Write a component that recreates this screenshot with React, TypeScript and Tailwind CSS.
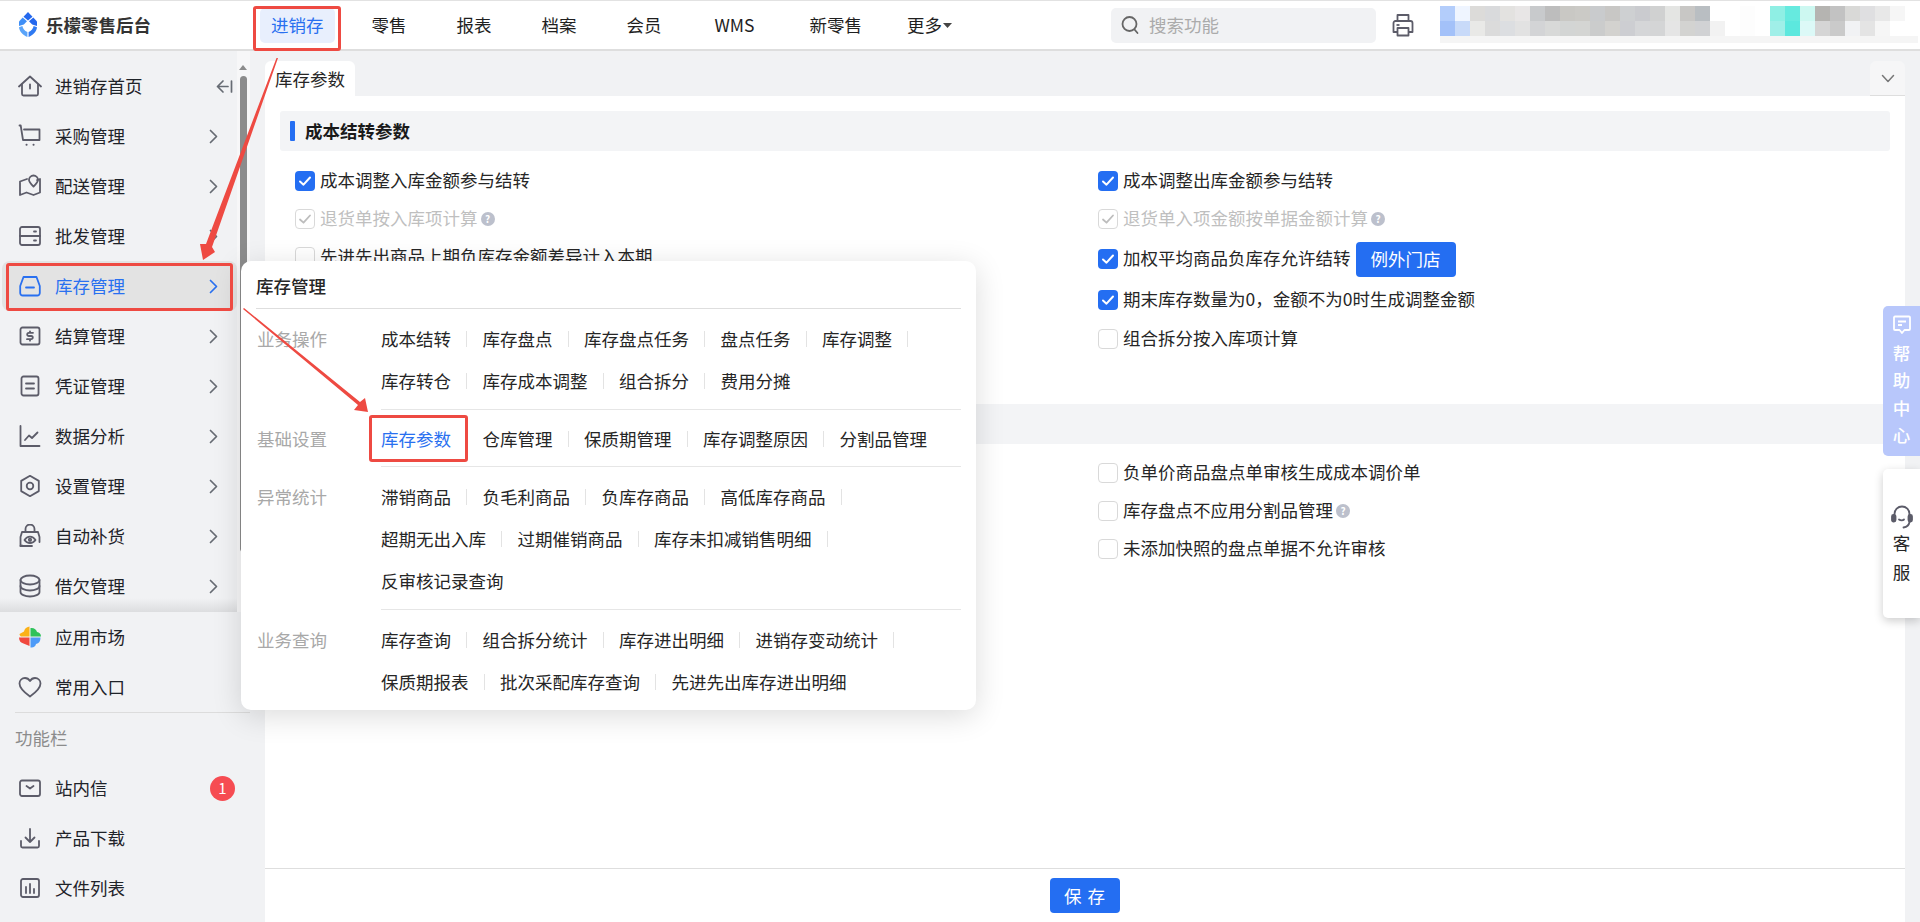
import React from 'react';

const S = ({ children, c = '#5c5c69', w = 1.8 }: { children: React.ReactNode; c?: string; w?: number }) => (
  <svg width="24" height="24" viewBox="0 0 24 24" fill="none" stroke={c} strokeWidth={w} strokeLinecap="round" strokeLinejoin="round">{children}</svg>
);

const icons: Record<string, (c?: string) => React.ReactNode> = {
  home: (c) => <S c={c}><path d="M1 12.500 12 2.500l11 10" /><path d="M4 10.500V20a1.500 1.500 0 0 0 1.500 1.500h13A1.500 1.500 0 0 0 20 20v-9.500" /><path d="M12 10.500v4" /></S>,
  cart: (c) => <S c={c}><path d="M1.500 1.500h1.200L5 16h16.500V5.500H6" /><path d="M8.500 20.800h.1M15.500 20.800h.1" strokeWidth="2" /></S>,
  map: (c) => <S c={c}><path d="M9 5 2 7.500V21l6.500-2.500 7 2.500 6.500-2.500V5l-3 1" /><path d="M15.500 12.500c-3-3-4.500-4.700-4.500-6.500a4.500 4.500 0 0 1 9 0c0 1.800-1.500 3.500-4.500 6.500Z" /></S>,
  box: (c) => <S c={c}><rect x="2" y="3" width="20" height="18" rx="2" /><path d="M2 12h20M16 7.500h2M16 16.500h2" /></S>,
  inv: (c) => <S c={c}><path d="M5.500 3h13l3.300 9v7a2.500 2.500 0 0 1-2.500 2.500H4.700A2.500 2.500 0 0 1 2.200 19v-7Z" /><path d="M8 13.500h8" /></S>,
  money: (c) => <S c={c}><rect x="2.500" y="3.500" width="19" height="17" rx="2" /><path d="M15 8.800h-4.200a1.500 1.500 0 0 0 0 3.200h2.400a1.500 1.500 0 0 1 0 3.200H9M12 7.300v1.500M12 15.200v1.500" /></S>,
  doc: (c) => <S c={c}><rect x="3.500" y="2.500" width="17" height="19" rx="2" /><path d="M8 9.500h8M8 14.500h8" /></S>,
  chart: (c) => <S c={c}><path d="M2.500 2v20h19" /><path d="M7 16l4-4.500 3 2.500 5.500-5.500" /></S>,
  gear: (c) => <S c={c}><path d="m12 1.800 8.800 5.100v10.200L12 22.200l-8.800-5.100V6.900Z" /><circle cx="12" cy="12" r="3.300" /></S>,
  auto: (c) => <S c={c}><path d="M7.500 8V5a4.500 4.500 0 0 1 9 0v3" /><path d="M4 21.500 2.500 22v-9L4 8h16l1.500 5v5" /><path d="M6.500 16c2.800-4.500 8.200-4.500 11 0-2.800 4-8.200 4-11 0Z" /><circle cx="12" cy="15.800" r="1.200" /><path d="M2.500 22H14" /></S>,
  debt: (c) => <S c={c}><ellipse cx="12" cy="6" rx="9.500" ry="4.500" /><path d="M2.500 6v12c0 2.500 4.300 4.500 9.500 4.500s9.500-2 9.500-4.500V6" /><path d="M2.500 12c0 2.500 4.300 4.500 9.500 4.500s9.500-2 9.500-4.500" /></S>,
  heart: (c) => <S c={c}><path d="M12 21.500C5 16.500 1.500 13 1.500 8.500 1.500 5.300 4 3 7 3c2 0 3.800 1 5 3 1.200-2 3-3 5-3 3 0 5.500 2.300 5.500 5.500 0 4.500-3.500 8-10.500 13Z" /></S>,
  mail: (c) => <S c={c}><rect x="2" y="4.500" width="20" height="15.500" rx="2" /><path d="m8.500 10 3.500 2.500 3.500-2.500" /></S>,
  down: (c) => <S c={c}><path d="M3 15v5a1.500 1.500 0 0 0 1.500 1.500h15A1.500 1.500 0 0 0 21 20v-5" /><path d="M12 3v13M7.500 11.500 12 16l4.500-4.500" /></S>,
  file: (c) => <S c={c}><rect x="3" y="3" width="18" height="18" rx="2" /><path d="M8 11v6M12 8v9M16 13v4" /></S>,
  market: () => (
    <svg width="24" height="24" viewBox="0 0 24 24">
      <path d="M11.500 1.500C8 2 6.500 4 6 6.500L1.500 9c0 .8.500 2 1.500 2.500h8.500z" fill="#fbb117" />
      <path d="M12.500 3V11.500H23C23 9 21.500 7.500 19 7c-.5-2.500-3-4.500-6.500-4z" fill="#2fc25b" />
      <path d="M12.500 12.500V22.500c3 .5 5-1 5.500-3.500 3-.5 4.500-3 4.500-6.500z" fill="#4d9bf8" />
      <path d="M1 12.500c0 3.500 2 5.500 4.500 6l6 2.500v-8.500z" fill="#f0483e" />
    </svg>
  ),
};

const Chevron = ({ c = '#666b73' }: { c?: string }) => (
  <svg width="9" height="15" viewBox="0 0 9 15" fill="none" stroke={c} strokeWidth="1.700" strokeLinecap="round" strokeLinejoin="round"><path d="m1.500 1.500 6 6-6 6" /></svg>
);

const menu = [
  { i: 'home', t: '进销存首页', collapse: true },
  { i: 'cart', t: '采购管理' },
  { i: 'map', t: '配送管理' },
  { i: 'box', t: '批发管理' },
  { i: 'inv', t: '库存管理', active: true },
  { i: 'money', t: '结算管理' },
  { i: 'doc', t: '凭证管理' },
  { i: 'chart', t: '数据分析' },
  { i: 'gear', t: '设置管理' },
  { i: 'auto', t: '自动补货' },
  { i: 'debt', t: '借欠管理' },
];

const groups = [
  { label: '业务操作', pt: 'pt-[9px]', cls: 'pt-[9px] pb-[7px] border-b border-[#e6e6e6]', rows: [['成本结转', '库存盘点', '库存盘点任务', '盘点任务', '库存调整'], ['库存转仓', '库存成本调整', '组合拆分', '费用分摊']] },
  { label: '基础设置', pt: 'pt-[8px]', cls: 'pt-[8px] pb-[6px] border-b border-[#e6e6e6]', rows: [['库存参数', '仓库管理', '保质期管理', '库存调整原因', '分割品管理']] },
  { label: '异常统计', pt: 'pt-[9px]', cls: 'pt-[9px] pb-[7px] border-b border-[#e6e6e6]', rows: [['滞销商品', '负毛利商品', '负库存商品', '高低库存商品'], ['超期无出入库', '过期催销商品', '库存未扣减销售明细'], ['反审核记录查询']] },
  { label: '业务查询', pt: 'pt-[9px]', cls: 'pt-[9px]', rows: [['库存查询', '组合拆分统计', '库存进出明细', '进销存变动统计'], ['保质期报表', '批次采配库存查询', '先进先出库存进出明细']] },
];

const top1 = ['#b3cdfb', '#eff5ff', '#dcdbd9', '#d9dadc', '#e3e2e0', '#e8e6e6', '#c8cacc', '#bdbdbd', '#c9c8c4', '#cbcac6', '#c9cbcd', '#c8c7c5', '#ced0d2', '#cacbcf', '#d0d1d1', '#e4e5e3', '#c8c7c5', '#b9bec2', '#fff', '#fff', '#fdfdfd', '#fff', '#8fefe4', '#66eadf', '#cdf8f1', '#b5b4b1', '#c2c2c2', '#d9d9d7', '#dfdfe1', '#e8e8e8', '#f6f6f6'];
const bot1 = ['#a3c1f9', '#c8daf9', '#e9e9e7', '#dbdbdb', '#dcdee1', '#e2e2e2', '#d3d4d6', '#d8d9d8', '#d3d5d4', '#d4d5d3', '#cbcccc', '#d3d2cf', '#cdced2', '#d5d6d8', '#d4d5d6', '#e5e5e5', '#d3d3d1', '#d1d2d4', '#f2f2f2', '#fff', '#fdfdfd', '#fff', '#a0efe8', '#5ce8de', '#dcf9f7', '#d5d5d5', '#cacaca', '#f1f2f4', '#e4e4e4', '#f6f6f6', '#fff'];

const Mosaic = () => (
  <svg width="480" height="38" viewBox="0 0 480 38" shapeRendering="crispEdges">
    <rect x="0" y="30" width="478" height="7" fill="#f5f5f5" />
    {top1.map((c, i) => <rect key={'a' + i} x={i * 15} y="0" width="15" height="15" fill={c} />)}
    {bot1.map((c, i) => <rect key={'b' + i} x={i * 15} y="15" width="15" height="15" fill={c} />)}
  </svg>
);

const Help = () => (
  <span className="ml-[3px] inline-flex w-[14px] h-[14px] rounded-full bg-[#bcc0cc] text-white text-[10px] leading-[14px] justify-center font-semibold">?</span>
);

const Check = ({ label, state, help, h = 'h-[38px]', children }: { label: string; state?: 'on' | 'dis'; help?: boolean; h?: string; children?: React.ReactNode }) => (
  <div className={`flex items-center ${h}`}>
    {state === 'on' ? (
      <span className="w-5 h-5 rounded-[4px] bg-[#246ef2] flex items-center justify-center shrink-0">
        <svg width="14" height="14" viewBox="0 0 14 14" fill="none" stroke="#fff" strokeWidth="2" strokeLinecap="round" strokeLinejoin="round"><path d="m2 7.500 3.500 3.200L12 3.500" /></svg>
      </span>
    ) : state === 'dis' ? (
      <span className="w-5 h-5 rounded-[4px] border border-[#d9d9d9] flex items-center justify-center shrink-0">
        <svg width="14" height="14" viewBox="0 0 14 14" fill="none" stroke="#bdbdbd" strokeWidth="1.800" strokeLinecap="round" strokeLinejoin="round"><path d="m2 7.500 3.500 3.200L12 3.500" /></svg>
      </span>
    ) : (
      <span className="w-5 h-5 rounded-[4px] border border-[#d9d9d9] bg-white shrink-0" />
    )}
    <span className={`ml-[5px] pb-[2px] whitespace-nowrap ${state === 'dis' ? 'text-[#bfbfbf]' : 'text-[#262626]'}`}>{label}</span>
    {help && <Help />}
    {children}
  </div>
);

const NavRow = ({ i, t, right }: { i: string; t: string; right?: React.ReactNode }) => (
  <div className="h-[50px] flex items-center pl-[18px] pr-[19px] text-[#1f2329]">
    <span className="w-[24px] flex justify-center">{icons[i]()}</span>
    <span className="ml-[13px]">{t}</span>
    {right && <span className="ml-auto">{right}</span>}
  </div>
);

export default function App() {
  return (
    <div className="relative h-[922px] w-[1920px] overflow-hidden bg-[#f1f2f4] font-['Noto_Sans_CJK_SC','Liberation_Sans',sans-serif] text-[17.5px] leading-[24px]">
      {/* header */}
      <header className="h-[51px] bg-white border-t border-b-2 border-t-[#e2e2e2] border-b-[#dedede] flex items-center">
        <svg className="ml-[19px] mb-[2px]" width="18" height="25" viewBox="0 0 18 25">
          <path d="M9 0 4.500 4.800 9 8.500l4.500-3.700Z" fill="#2468ee" />
          <path d="M3.700 5.600 0 9.500V14l4.800-1.500L8 9.300Z" fill="#3f8ff7" />
          <path d="M14.300 5.600 18 9.500V14l-4.800-1.500L10 9.300Z" fill="#2468ee" />
          <path d="M0 15.200c.3 4.300 4 7.800 8.400 9.800v-5c-2.800-1.200-4.700-3.400-5-6Z" fill="#5aa4f9" />
          <path d="M18 15.200c-.3 4.300-4 7.800-8.400 9.800v-5c2.800-1.200 4.700-3.400 5-6Z" fill="#2f7af2" />
        </svg>
        <span className="ml-[9px] w-[214px] font-semibold text-[#333]">乐檬零售后台</span>
        <nav className="flex items-center text-[#1f1f1f]">
          <span className="h-[35px] px-[11px] rounded-[5px] bg-[#e8effd] text-[#2970f0] flex items-center">进销存</span>
          <span className="ml-[27px] px-[10px]">零售</span>
          <span className="ml-[30px] px-[10px]">报表</span>
          <span className="ml-[30px] px-[10px]">档案</span>
          <span className="ml-[30px] px-[10px]">会员</span>
          <span className="ml-[33px] px-[10px]">WMS</span>
          <span className="ml-[35px] px-[10px]">新零售</span>
          <span className="ml-[25px] px-[10px] flex items-center">更多
            <svg className="ml-[1px]" width="9" height="5" viewBox="0 0 9 5"><path d="M0 0h9L4.500 5z" fill="#444" /></svg>
          </span>
        </nav>
        <div className="ml-auto flex items-center">
          <div className="w-[265px] h-[35px] rounded-[5px] bg-[#f1f2f4] flex items-center pl-[9px] text-[#ababab]">
            <svg width="20" height="20" viewBox="0 0 20 20" fill="none" stroke="#666" strokeWidth="1.800" strokeLinecap="round"><circle cx="9.500" cy="9" r="7" /><path d="m14.500 14.500 3 3.500" /></svg>
            <span className="ml-[9px]">搜索功能</span>
          </div>
          <svg className="ml-[15px]" width="24" height="24" viewBox="0 0 24 24" fill="none" stroke="#5c5c69" strokeWidth="1.800" strokeLinejoin="round"><path d="M6.500 8V2h11v6" /><path d="M6.500 19H2.500V10a2 2 0 0 1 2-2h15a2 2 0 0 1 2 2v9h-4" /><rect x="6.500" y="15" width="11" height="7.500" /><path d="M5.500 12h3" /></svg>
          <div className="ml-[25px] w-[480px]"><Mosaic /></div>
        </div>
      </header>

      <div className="flex h-[871px]">
        {/* sidebar */}
        <aside className="w-[265px] shrink-0 flex flex-col">
          <div className="relative h-[561px] flex shrink-0">
            <div className="w-[237px] pt-[10px]">
              {menu.map((m) => m.active ? (
                <div key={m.t} className="h-[50px] ml-[2px] rounded-[8px] bg-[#e3e3e3] flex items-center pl-[16px] pr-[19px] text-[#2970f0]">
                  <span className="w-[24px] flex justify-center">{icons[m.i]('#2970f0')}</span>
                  <span className="ml-[13px]">{m.t}</span>
                  <span className="ml-auto"><Chevron c="#2970f0" /></span>
                </div>
              ) : (
                <NavRow key={m.t} i={m.i} t={m.t} right={m.collapse ? (
                  <svg className="-mr-[15px]" width="17" height="15" viewBox="0 0 17 15" fill="none" stroke="#666b73" strokeWidth="1.700" strokeLinecap="round" strokeLinejoin="round"><path d="M7 2 1.500 7.500 7 13M1.500 7.500h10.500M15.500 2v11" /></svg>
                ) : <Chevron />} />
              ))}
            </div>
            <div className="w-[13px] bg-[#f7f7f8] flex flex-col items-center pt-[14px]">
              <span className="w-0 h-0 border-x-[4px] border-x-transparent border-b-[5px] border-b-[#8c8c8c] -ml-[1px]" />
              <span className="mt-[6px] w-[7px] h-[476px] rounded-[4px] bg-[#8c8c8c] -ml-[1px]" />
            </div>
            <div className="absolute inset-x-0 bottom-0 w-[237px] h-[14px] bg-gradient-to-b from-transparent to-[#dcdddf]" />
          </div>
          <NavRow i="market" t="应用市场" />
          <NavRow i="heart" t="常用入口" />
          <div className="mx-[15px] border-t border-[#dcdcdc]" />
          <div className="pl-[15px] h-[50px] flex items-center text-[#8c8c8c]">功能栏</div>
          <NavRow i="mail" t="站内信" right={<span className="mr-[11px] w-[25px] h-[25px] rounded-full bg-[#f64c52] text-white text-[15px] flex items-center justify-center">1</span>} />
          <NavRow i="down" t="产品下载" />
          <NavRow i="file" t="文件列表" />
        </aside>

        {/* main */}
        <main className="w-[1640px] shrink-0 flex flex-col">
          <div className="h-[45px] pt-[10px] flex justify-between shrink-0">
            <div className="w-[90px] h-[35px] rounded-t-[6px] bg-white pl-[10px] text-[#262626] flex items-center">库存参数</div>
            <div className="w-[35px] h-[35px] rounded-t-[6px] bg-[#f6f6f7] border-b border-[#dedede] flex items-center justify-center">
              <svg width="14" height="9" viewBox="0 0 14 9" fill="none" stroke="#777" strokeWidth="1.500" strokeLinecap="round" strokeLinejoin="round"><path d="m1.500 1.500 5.500 6 5.500-6" /></svg>
            </div>
          </div>
          <div className="flex-1 bg-white pl-[15px] pr-[15px] pt-[15px]">
            <div className="h-[40px] rounded-[3px] bg-[#f3f4f6] flex items-center pl-[10px]">
              <span className="w-[5px] h-[20px] rounded-[1px] bg-[#246ef2]" />
              <span className="ml-[10px] font-bold text-[#1a1a1a]">成本结转参数</span>
            </div>
            <div className="mt-[11px] pl-[15px] grid grid-cols-[803px_1fr]">
              <div>
                <Check label="成本调整入库金额参与结转" state="on" />
                <Check label="退货单按入库项计算" state="dis" help />
                <Check label="先进先出商品上期负库存金额差异计入本期" />
              </div>
              <div>
                <Check label="成本调整出库金额参与结转" state="on" />
                <Check label="退货单入项金额按单据金额计算" state="dis" help />
                <Check label="加权平均商品负库存允许结转" state="on" h="h-[42px]">
                  <span className="ml-[5px] w-[100px] h-[35px] rounded-[4px] bg-[#246ef2] text-white flex items-center justify-center">例外门店</span>
                </Check>
                <Check label="期末库存数量为0，金额不为0时生成调整金额" state="on" h="h-[40px]" />
                <Check label="组合拆分按入库项计算" />
              </div>
            </div>
            <div className="mt-[46px] h-[40px] bg-[#f3f4f6]" />
            <div className="mt-[10px] pl-[15px] grid grid-cols-[803px_1fr]">
              <div />
              <div>
                <Check label="负单价商品盘点单审核生成成本调价单" />
                <Check label="库存盘点不应用分割品管理" help />
                <Check label="未添加快照的盘点单据不允许审核" />
              </div>
            </div>
          </div>
          <div className="h-[54px] shrink-0 bg-white border-t border-[#dedede] flex justify-center pt-[9px]">
            <span className="w-[70px] h-[35px] rounded-[4px] bg-[#246ef2] text-white flex items-center justify-center whitespace-pre tracking-[1px]">保 存</span>
          </div>
        </main>
      </div>

      {/* flyout */}
      <div className="absolute left-[241px] top-[261px] w-[735px] h-[449px] rounded-[10px] bg-white shadow-[0_6px_30px_rgba(0,0,0,0.14)] px-[15px]">
        <div className="h-[48px] border-b border-[#dedede] flex items-center text-[#262626] font-medium pt-[2px]">库存管理</div>
        {groups.map((g) => (
          <div key={g.label} className="flex">
            <div className={`w-[125px] shrink-0 ${g.pt} text-[#a8a8a8]`}>
              <div className="h-[42px] flex items-center pl-[1px]">{g.label}</div>
            </div>
            <div className={`flex-1 ${g.cls}`}>
              {g.rows.map((row, ri) => (
                <div key={ri} className="h-[42px] flex items-center text-[#262626]">
                  {row.map((t, i) => (
                    <span key={t} className="flex items-center whitespace-nowrap">
                      <span className={t === '库存参数' ? 'text-[#2970f0]' : ''}>{t}</span>
                      {(i < row.length - 1 || ri < g.rows.length - 1) && <span className="w-px h-[16px] bg-[#e3e3e3] mx-[15.25px]" />}
                    </span>
                  ))}
                </div>
              ))}
            </div>
          </div>
        ))}
      </div>

      {/* side tabs */}
      <div className="absolute right-0 top-[306px] w-[37px] h-[150px] rounded-l-[5px] bg-[#b8c7fb] flex flex-col items-center text-white pt-[8px]">
        <svg className="mb-[3px]" width="20" height="22" viewBox="0 0 20 22" fill="none" stroke="#fff" strokeWidth="1.800" strokeLinejoin="round"><path d="M2 3.500a1 1 0 0 1 1-1h14a1 1 0 0 1 1 1V15a1 1 0 0 1-1 1h-4.500L10 19l-2.500-3H3a1 1 0 0 1-1-1Z" /><path d="M6 7.500h8M6 11h4" /></svg>
        {['帮', '助', '中', '心'].map((t) => <span key={t} className="h-[27.5px] flex items-center font-medium">{t}</span>)}
      </div>
      <div className="absolute right-0 top-[469px] w-[37px] h-[149px] rounded-l-[5px] bg-white shadow-[0_3px_10px_rgba(0,0,0,0.2)] flex flex-col items-center text-[#262626] pt-[36px]">
        <svg width="22" height="24" viewBox="0 0 22 24" fill="none" stroke="#5c5c69" strokeWidth="1.800" strokeLinecap="round"><path d="M3.500 11V9a7.500 7.500 0 0 1 15 0v2" /><rect x="1" y="10" width="3.500" height="6.500" rx="1.500" fill="#5c5c69" /><rect x="17.500" y="10" width="3.500" height="6.500" rx="1.500" fill="#5c5c69" /><path d="M18.500 17c-.5 3-3 5-6 5.500" /><path d="M8 14.500c1.500 1 4 1 5 0" /></svg>
        <span className="h-[27px] flex items-center">客</span>
        <span className="h-[27px] mt-[2px] flex items-center">服</span>
      </div>

      {/* annotations */}
      <div className="absolute left-[253px] top-[6px] w-[88px] h-[45px] rounded-[3px] border-[3px] border-[#ee4a42]" />
      <div className="absolute left-[6px] top-[263px] w-[227px] h-[48px] rounded-[3px] border-[3px] border-[#ee4a42]" />
      <div className="absolute left-[369px] top-[415px] w-[99px] h-[47px] rounded-[3px] border-[3px] border-[#ee4a42]" />
      <svg className="absolute left-0 top-0 pointer-events-none" width="1920" height="922" viewBox="0 0 1920 922">
        <polygon points="276.500,58 278,58 212,247 215,252 203,260 200,244 206,244" fill="#ee4a42" />
        <polygon points="243,309 244,308 360,402 365,398 368,412 354,410 358,405" fill="#ee4a42" />
      </svg>
    </div>
  );
}
